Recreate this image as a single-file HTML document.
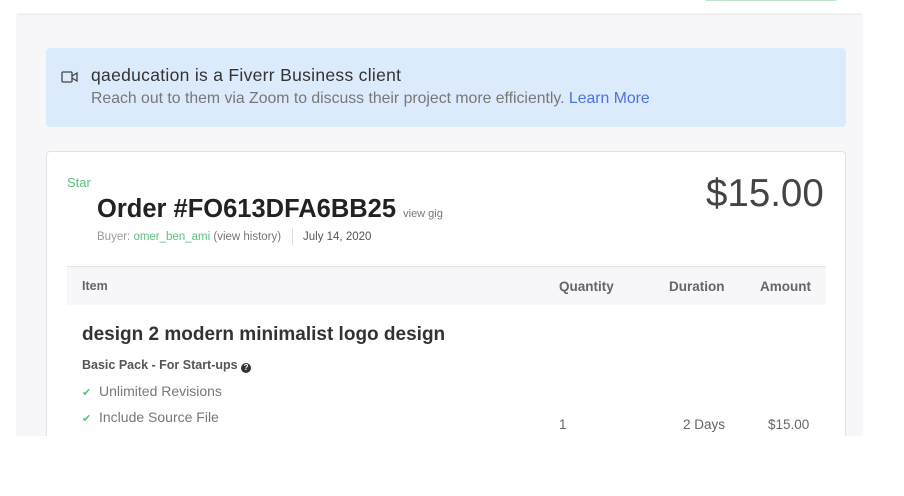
<!DOCTYPE html>
<html><head><meta charset="utf-8"><style>
*{margin:0;padding:0;box-sizing:border-box}
body{width:904px;height:496px;background:#fff;font-family:"Liberation Sans",sans-serif;position:relative;overflow:hidden}
.abs{position:absolute;white-space:nowrap}
</style></head><body>
<div class="abs" style="left:705px;top:-2px;width:132px;height:3px;background:#bfe8cc;border-radius:2px"></div>
<div class="abs" style="left:17px;top:15px;width:845px;height:421px;background:#f7f6f8;box-shadow:0 -1px 2px rgba(0,0,0,.12)"></div>
<div class="abs" style="left:46px;top:48px;width:800px;height:79px;background:#dcebfb;border-radius:4px"></div>
<svg class="abs" style="left:61px;top:70px" width="18" height="14" viewBox="0 0 18 14"><rect x="1" y="2" width="10" height="10" rx="1" fill="none" stroke="#444" stroke-width="1.3"/><path d="M11 6 L16 3 V11 L11 8" fill="none" stroke="#444" stroke-width="1.3"/></svg>
<div class="abs" style="left:91px;top:65px;font-size:17.5px;letter-spacing:0.3px;color:#333">qaeducation is a Fiverr Business client</div>
<div class="abs" style="left:91px;top:90px;font-size:15.8px;color:#777">Reach out to them via Zoom to discuss their project more efficiently. <span style="color:#4a73e8">Learn More</span></div>
<div class="abs" style="left:46px;top:151px;width:800px;height:290px;background:#fff;border:1px solid #e2e2e2;border-radius:4px"></div>
<div class="abs" style="left:67px;top:175px;font-size:13px;color:#5bbf7e">Star</div>
<div class="abs" style="left:97px;top:195px;font-size:25.5px;font-weight:bold;color:#222">Order #FO613DFA6BB25 <span style="font-size:11px;font-weight:normal;color:#777">view gig</span></div>
<div class="abs" style="left:97px;top:231px;font-size:11.5px;color:#999">Buyer: <span style="color:#5bbf7e">omer_ben_ami</span> <span style="color:#777">(view history)</span></div>
<div class="abs" style="left:292px;top:228px;width:1px;height:17px;background:#ddd"></div>
<div class="abs" style="left:303px;top:231px;font-size:11.5px;color:#555">July 14, 2020</div>
<div class="abs" style="left:706px;top:172px;font-size:38.5px;color:#444">$15.00</div>
<div class="abs" style="left:67px;top:266px;width:759px;height:39px;background:#f7f6f8;border-top:1px solid #e6e6e6"></div>
<div class="abs" style="left:82px;top:279px;font-size:12.5px;font-weight:bold;color:#666">Item</div>
<div class="abs" style="left:559px;top:279px;font-size:13.5px;font-weight:bold;color:#666">Quantity</div>
<div class="abs" style="left:669px;top:279px;font-size:13.5px;font-weight:bold;color:#666">Duration</div>
<div class="abs" style="left:760px;top:279px;font-size:13.5px;font-weight:bold;color:#666">Amount</div>
<div class="abs" style="left:82px;top:324px;font-size:19px;font-weight:bold;color:#333">design 2 modern minimalist logo design</div>
<div class="abs" style="left:82px;top:358px;font-size:12.5px;font-weight:bold;color:#555">Basic Pack - For Start-ups <span style="display:inline-block;width:10px;height:10px;border-radius:50%;background:#333;color:#fff;font-size:8px;text-align:center;line-height:10px;vertical-align:-1px">?</span></div>
<div class="abs" style="left:82px;top:383px;font-size:14px;color:#777"><span style="color:#5bbf7e;font-size:11px">✔</span>&nbsp; Unlimited Revisions</div>
<div class="abs" style="left:82px;top:409px;font-size:14px;color:#777"><span style="color:#5bbf7e;font-size:11px">✔</span>&nbsp; Include Source File</div>
<div class="abs" style="left:559px;top:417px;font-size:13.5px;color:#666">1</div>
<div class="abs" style="left:683px;top:417px;font-size:13.5px;color:#666">2 Days</div>
<div class="abs" style="left:768px;top:417px;font-size:13.5px;color:#666">$15.00</div>
<div class="abs" style="left:0;top:436px;width:904px;height:60px;background:#fff"></div>
</body></html>
